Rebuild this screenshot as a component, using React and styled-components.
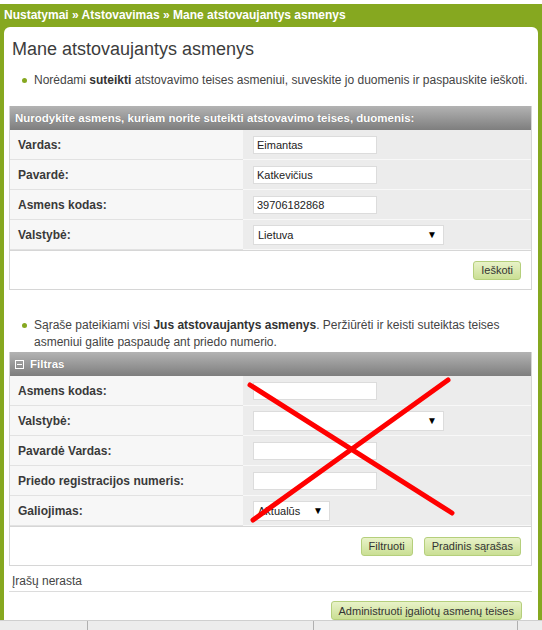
import React from "react";
import styled, { createGlobalStyle } from "styled-components";

const GlobalStyle = createGlobalStyle`
  body {
    margin: 0;
    background: #ffffff;
    font-family: "Liberation Sans", Arial, sans-serif;
    color: #3a3a3a;
  }
`;

const Page = styled.div`
  width: 542px;
  height: 630px;
  padding-top: 4px;
  box-sizing: border-box;
  background: #ffffff;
  display: flex;
  flex-direction: column;
  overflow: hidden;
`;

const Shell = styled.div`
  flex: 1;
  background: #86a820;
  padding: 0 4px;
  display: flex;
  flex-direction: column;
`;

const Breadcrumb = styled.div`
  height: 23px;
  line-height: 23px;
  font-size: 12px;
  font-weight: bold;
  color: #ffffff;
`;

const Content = styled.div`
  flex: 1;
  position: relative;
  background: #ffffff;
  border-radius: 6px 6px 0 0;
  padding: 0 6px 0 5px;
`;

const Title = styled.h1`
  margin: 0;
  padding: 10px 0 0 3px;
  height: 32px;
  font-size: 18px;
  font-weight: normal;
  color: #3c3c3c;
  line-height: 24px;
`;

const Note = styled.div`
  position: relative;
  padding-left: 25px;
  font-size: 12px;
  line-height: 17px;
  color: #444;
  margin: ${(p) => p.$margin};

  &::before {
    content: "";
    position: absolute;
    left: 13px;
    top: 6px;
    width: 5px;
    height: 5px;
    border-radius: 50%;
    background: #86a820;
  }

  b {
    color: #333;
  }
`;

const Box = styled.div`
  border: 1px solid #d6d6d6;
  border-top: none;
`;

const BoxHeader = styled.div`
  height: 24px;
  display: flex;
  align-items: center;
  gap: 6px;
  padding-left: 5px;
  background: linear-gradient(#b3b3b3, #7e7e7e);
  color: #ffffff;
  font-size: 11.5px;
  font-weight: bold;
  text-shadow: 0 0 1px rgba(0, 0, 0, 0.3);
`;

const Toggle = styled.span`
  width: 7px;
  height: 7px;
  border: 1px solid #ffffff;
  position: relative;

  &::after {
    content: "";
    position: absolute;
    left: 1px;
    right: 1px;
    top: 3px;
    height: 1px;
    background: #ffffff;
  }
`;

const Row = styled.div`
  display: grid;
  grid-template-columns: 233px 1fr;
  height: 30px;
`;

const Label = styled.div`
  display: flex;
  align-items: center;
  padding-left: 8px;
  background: #f7f7f7;
  border-bottom: 1px solid #e2e2e2;
  font-size: 12px;
  font-weight: bold;
  color: #3a3a3a;
`;

const Value = styled.div`
  display: flex;
  align-items: center;
  padding-left: 10px;
  background: #ececec;
  border-bottom: 1px solid #f8f8f8;
`;

const Input = styled.input`
  box-sizing: border-box;
  width: 124px;
  height: 18px;
  border: 1px solid #dcdcdc;
  background: #ffffff;
  padding: 0 3px;
  font-family: "Liberation Sans", Arial, sans-serif;
  font-size: 11px;
  color: #222;
  outline: none;
`;

const Select = styled.div`
  box-sizing: border-box;
  width: ${(p) => p.$width}px;
  height: 20px;
  border: 1px solid #dcdcdc;
  background: #ffffff;
  display: flex;
  align-items: center;
  justify-content: space-between;
  padding: 0 6px 0 4px;
  font-size: 11px;
  color: #222;
`;

const Arrow = styled.span`
  font-size: 10px;
  color: #000;
`;

const BoxFooter = styled.div`
  height: 38px;
  border-top: 1px solid #d6d6d6;
  display: flex;
  justify-content: flex-end;
  align-items: center;
  gap: 11px;
  padding-right: 10px;
  background: #ffffff;
`;

const Button = styled.button`
  height: 19px;
  padding: 0 7px;
  border: 1px solid #b5cf7c;
  border-radius: 3px;
  background: linear-gradient(#e8f2c8, #cadf94);
  font-family: "Liberation Sans", Arial, sans-serif;
  font-size: 11px;
  color: #333;
  cursor: pointer;
`;

const Empty = styled.div`
  margin-top: 8px;
  padding: 0 3px;
  height: 17px;
  font-size: 12px;
  color: #444;
  border-bottom: 1px solid #dcdcdc;
`;

const Actions = styled.div`
  display: flex;
  justify-content: flex-end;
  padding: 9px 10px 0 0;
`;

const Cross = styled.svg`
  position: absolute;
  left: 240px;
  top: 345px;
  pointer-events: none;
`;

const Footer = styled.div`
  height: 10px;
  background: #ececec;
  border-top: 1px solid #cfcfcf;
  display: grid;
  grid-template-columns: 88px 226px 204px 1fr;
`;

const FooterCell = styled.div`
  border-right: 1px solid #b0b0b0;
  &:last-child {
    border-right: none;
  }
`;

const FieldRow = ({ label, children }) => (
  <Row>
    <Label>{label}</Label>
    <Value>{children}</Value>
  </Row>
);

const App = () => {
  return (
    <>
      <GlobalStyle />
      <Page>
        <Shell>
          <Breadcrumb>Nustatymai » Atstovavimas » Mane atstovaujantys asmenys</Breadcrumb>
          <Content>
            <Title>Mane atstovaujantys asmenys</Title>
            <Note $margin="3px 0 17px">
              Norėdami <b>suteikti</b> atstovavimo teises asmeniui, suveskite jo duomenis ir paspauskite ieškoti.
            </Note>
            <Box>
              <BoxHeader>Nurodykite asmens, kuriam norite suteikti atstovavimo teises, duomenis:</BoxHeader>
              <FieldRow label="Vardas:">
                <Input defaultValue="Eimantas" />
              </FieldRow>
              <FieldRow label="Pavardė:">
                <Input defaultValue="Katkevičius" />
              </FieldRow>
              <FieldRow label="Asmens kodas:">
                <Input defaultValue="39706182868" />
              </FieldRow>
              <FieldRow label="Valstybė:">
                <Select $width={191}>
                  <span>Lietuva</span>
                  <Arrow>▼</Arrow>
                </Select>
              </FieldRow>
              <BoxFooter>
                <Button>Ieškoti</Button>
              </BoxFooter>
            </Box>
            <Note $margin="27px 0 1px">
              Sąraše pateikiami visi <b>Jus atstovaujantys asmenys</b>. Peržiūrėti ir keisti suteiktas teises asmeniui galite paspaudę ant priedo numerio.
            </Note>
            <Box>
              <BoxHeader>
                <Toggle />
                Filtras
              </BoxHeader>
              <FieldRow label="Asmens kodas:">
                <Input />
              </FieldRow>
              <FieldRow label="Valstybė:">
                <Select $width={191}>
                  <span />
                  <Arrow>▼</Arrow>
                </Select>
              </FieldRow>
              <FieldRow label="Pavardė Vardas:">
                <Input />
              </FieldRow>
              <FieldRow label="Priedo registracijos numeris:">
                <Input />
              </FieldRow>
              <FieldRow label="Galiojimas:">
                <Select $width={77}>
                  <span>Aktualūs</span>
                  <Arrow>▼</Arrow>
                </Select>
              </FieldRow>
              <BoxFooter>
                <Button>Filtruoti</Button>
                <Button>Pradinis sąrašas</Button>
              </BoxFooter>
            </Box>
            <Empty>Įrašų nerasta</Empty>
            <Actions>
              <Button>Administruoti įgaliotų asmenų teises</Button>
            </Actions>
            <Cross width="220" height="160" viewBox="0 0 220 160">
              <line x1="6" y1="13" x2="208" y2="141" stroke="#ff0000" strokeWidth="5" strokeLinecap="round" />
              <line x1="204" y1="8" x2="9" y2="148" stroke="#ff0000" strokeWidth="5" strokeLinecap="round" />
            </Cross>
          </Content>
        </Shell>
        <Footer>
          <FooterCell />
          <FooterCell />
          <FooterCell />
          <FooterCell />
        </Footer>
      </Page>
    </>
  );
};

export default App;
